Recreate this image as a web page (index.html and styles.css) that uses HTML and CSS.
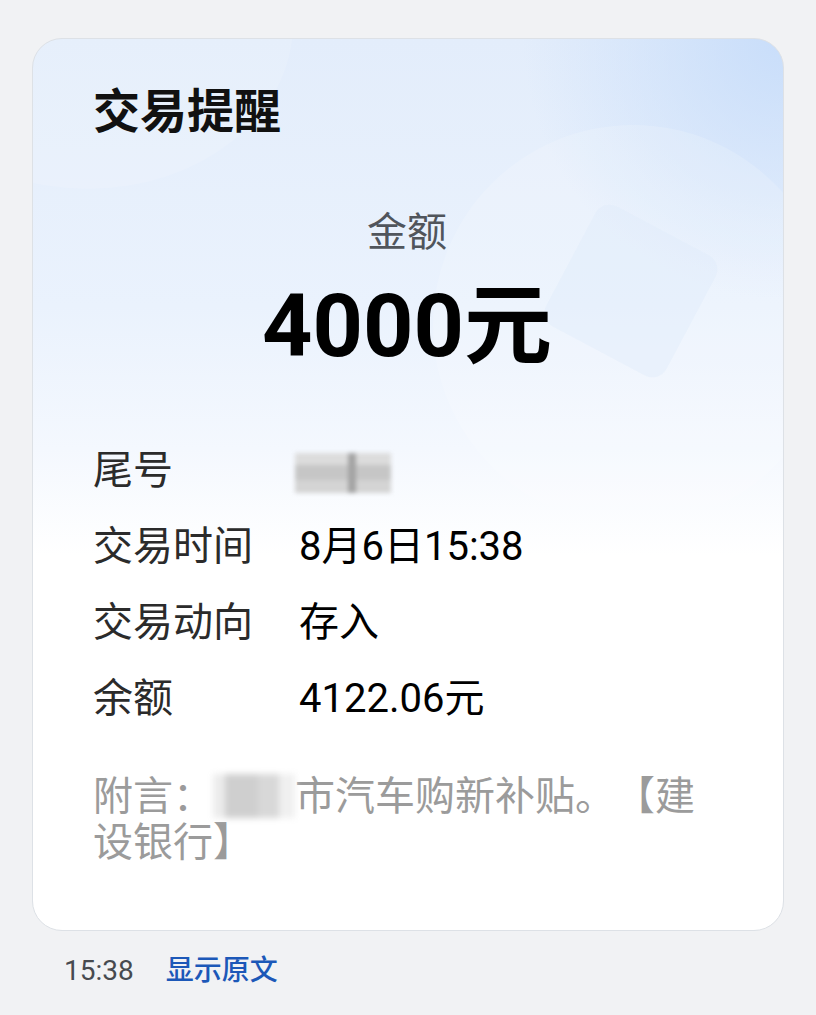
FILE: index.html
```html
<!DOCTYPE html>
<html lang="zh-CN">
<head>
  <meta charset="UTF-8">
  <meta name="viewport" content="width=device-width, initial-scale=1">
  <title>交易提醒</title>
  <link rel="stylesheet" href="styles.css">
</head>
<body>

  <!-- Message card -->
  <div class="card">
    <div class="deco deco-left"></div>
    <div class="deco deco-circle"></div>
    <div class="deco deco-square"></div>

    <div class="card-body">
      <h1 class="title">交易提醒</h1>

      <div class="amount-label">金额</div>
      <div class="amount">4000元</div>

      <div class="rows">
        <div class="label">尾号</div>
        <div class="value"><span class="mask mask-tail"></span></div>
        <div class="label">交易时间</div>
        <div class="value">8月6日15:38</div>
        <div class="label">交易动向</div>
        <div class="value">存入</div>
        <div class="label">余额</div>
        <div class="value">4122.06元</div>
      </div>

      <p class="note">附言：<span class="mask mask-note"></span>市汽车购新补贴。【建设银行】</p>
    </div>
  </div>

  <!-- Footer -->
  <div class="meta">
    <span class="time">15:38</span>
    <a href="#" class="show-raw">显示原文</a>
  </div>

</body>
</html>
```

FILE: styles.css
```css
/* Global */
body {
  margin: 0;
  background: #f1f2f4;
  font-family: Roboto, "Noto Sans CJK SC", sans-serif;
  color: #111;
  text-spacing-trim: space-all;
}
a {
  text-decoration: none;
}

/* Card */
.card {
  position: relative;
  overflow: hidden;
  margin: 38px 0 0 32px;
  width: 750px;
  border: 1px solid #dde1e6;
  border-radius: 30px;
  background:
    radial-gradient(circle at 100% 0%, rgba(198, 220, 250, 0.9) 0, rgba(198, 220, 250, 0) 260px),
    linear-gradient(180deg, #e3edfb 0%, #eaf2fd 30%, #f4f8fe 46%, #ffffff 58%);
}
.deco {
  position: absolute;
  pointer-events: none;
}
.deco-left {
  left: -150px;
  top: -180px;
  width: 410px;
  height: 330px;
  border-radius: 50%;
  background: rgba(255, 255, 255, 0.12);
}
.deco-circle {
  left: 400px;
  top: 86px;
  width: 400px;
  height: 400px;
  border-radius: 50%;
  background: rgba(255, 255, 255, 0.16);
}
.deco-square {
  left: 530px;
  top: 184px;
  width: 136px;
  height: 136px;
  border-radius: 16px;
  background: rgba(222, 234, 251, 0.4);
  transform: rotate(28deg);
}
.card-body {
  position: relative;
  padding: 45px 62px 64px 60px;
}

/* Header + amount */
.title {
  margin: 0;
  font-size: 47px;
  line-height: 56px;
  font-weight: 700;
  color: #111;
}
.amount-label {
  margin-top: 69px;
  text-align: center;
  font-size: 40px;
  line-height: 48px;
  color: #50555c;
}
.amount {
  margin-top: 19px;
  text-align: center;
  font-size: 88px;
  line-height: 100px;
  font-weight: 700;
  color: #000;
}

/* Detail rows */
.rows {
  margin-top: 57px;
  display: grid;
  grid-template-columns: 206px 1fr;
  font-size: 40px;
  line-height: 76px;
}
.label {
  color: #2b2b2b;
}
.value {
  color: #000;
}
.mask {
  display: inline-block;
  vertical-align: middle;
  filter: blur(2px);
}
.mask-tail {
  width: 96px;
  height: 40px;
  margin-left: -4px;
  background:
    linear-gradient(90deg, transparent 0 55%, #a4a4a4 55% 64%, transparent 64%),
    linear-gradient(180deg, #dcdcdc 0 30%, #c6c6c6 30% 68%, #d4d4d4 68%);
}

/* Note */
.note {
  margin: 37px 0 0;
  font-size: 40px;
  line-height: 46px;
  color: #9b9b9b;
}
.mask-note {
  width: 82px;
  height: 44px;
  margin-top: -6px;
  background:
    linear-gradient(90deg, #ececec 0 15%, #cfcfcf 15% 55%, #d8d8d8 55% 80%, #f0f0f0 80%);
  filter: blur(3px);
}

/* Footer */
.meta {
  display: flex;
  gap: 32px;
  margin: 20px 0 0 64px;
  font-size: 28px;
  line-height: 40px;
}
.time {
  color: #474a4f;
}
.show-raw {
  color: #1c58b8;
  font-weight: 500;
}
```
